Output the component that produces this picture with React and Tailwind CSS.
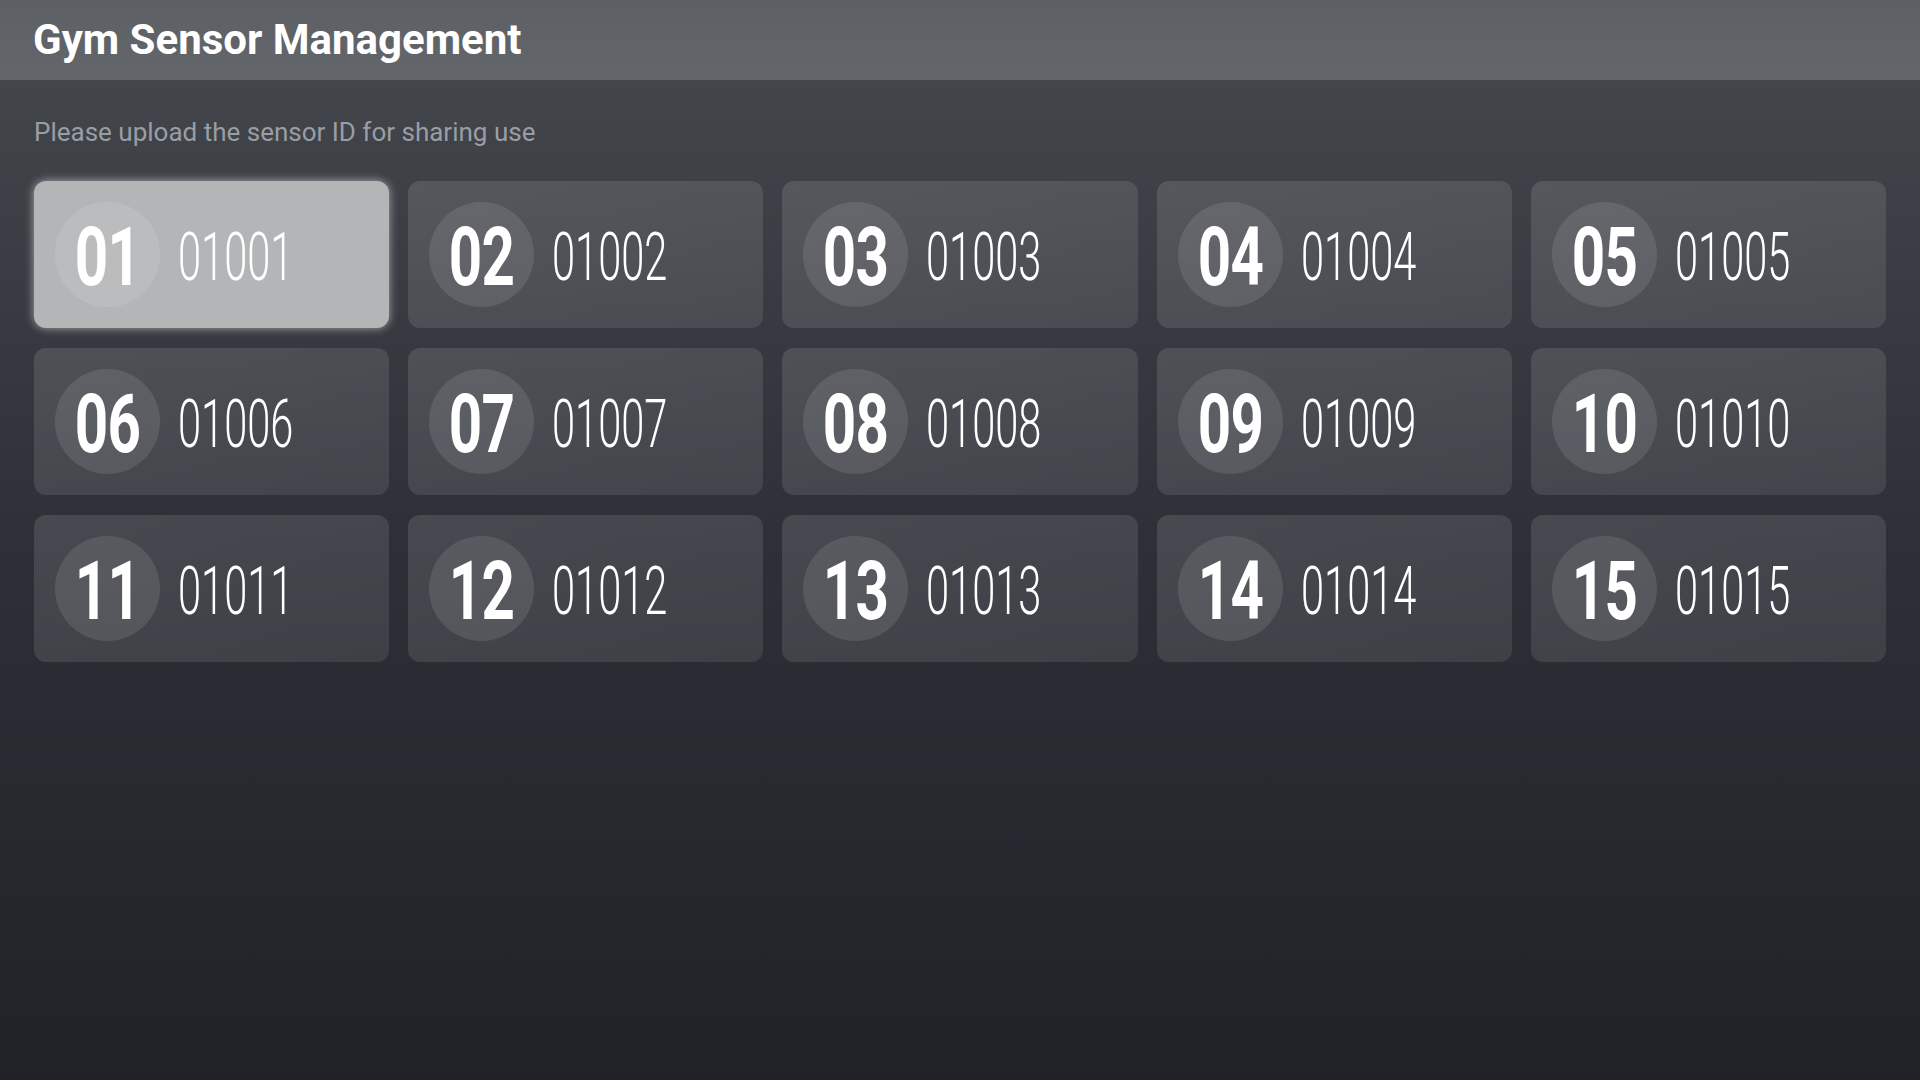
import { useState } from 'react';

const sensors = Array.from({ length: 15 }, (_, i) => {
  const n = i + 1;
  return { no: String(n).padStart(2, '0'), id: '010' + String(n).padStart(2, '0') };
});

export default function App() {
  const [active, setActive] = useState('01');

  return (
    <div className="min-h-screen w-full bg-gradient-to-b from-[#46494e] via-[#2d3037] to-[#202227]" style={{ fontFamily: 'Roboto, "Noto Sans", sans-serif' }}>
      {/* Header */}
      <div className="h-[80px] flex items-center px-[33px] bg-gradient-to-b from-[#5c5f63] to-[#63666a]">
        <h1 className="text-[42px] font-bold text-white leading-none">Gym Sensor Management</h1>
      </div>

      <div className="px-[34px] pt-[39px]">
        <p className="text-[26px] text-[#9a9ea4] leading-none">Please upload the sensor ID for sharing use</p>

        {/* Sensor grid */}
        <div className="grid grid-cols-5 gap-x-[19px] gap-y-[20px] mt-[36px]">
          {sensors.map(s => {
            const on = s.no === active;
            return (
              <button
                key={s.no}
                onClick={() => setActive(s.no)}
                className={`h-[147px] rounded-[12px] flex items-center px-[21px] text-left ${on
                  ? 'bg-[#b3b5b7] shadow-[0_0_10px_rgba(255,255,255,0.55)]'
                  : 'bg-gradient-to-br from-white/[0.12] to-white/[0.09]'}`}
              >
                <div className="w-[105px] h-[105px] rounded-full bg-white/10 flex items-center justify-center shrink-0">
                  <span className="text-[81px] font-bold text-white leading-none tracking-[-1px] inline-block scale-x-[0.72] translate-y-[3px]">{s.no}</span>
                </div>
                <span className="ml-[18px] text-[66px] font-light text-white leading-none inline-block scale-x-[0.63] origin-left translate-y-[3px]">{s.id}</span>
              </button>
            );
          })}
        </div>
      </div>
    </div>
  );
}
